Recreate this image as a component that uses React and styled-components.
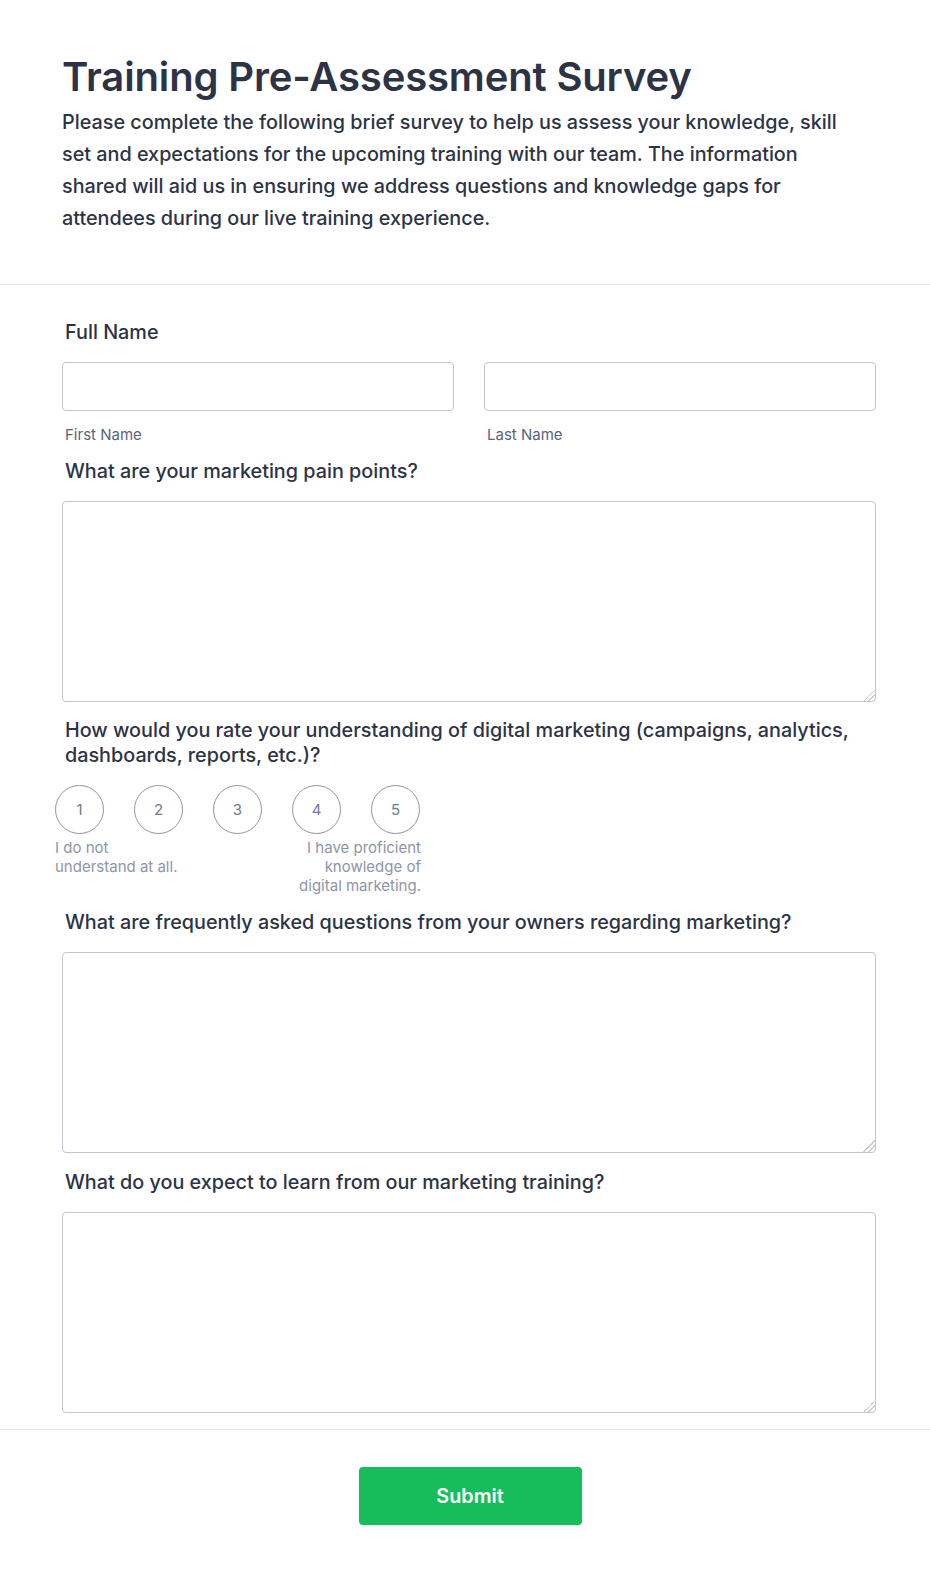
import React from 'react';
import styled, { createGlobalStyle } from 'styled-components';

const GlobalStyle = createGlobalStyle`
	html, body {
		margin: 0;
		padding: 0;
		background: #ffffff;
	}
	body {
		font-family: Inter, 'Noto Sans', 'Liberation Sans', sans-serif;
		color: #2c3345;
	}
	* {
		box-sizing: border-box;
	}
`;

const Page = styled.div`
	width: 100%;
	background: #fff;
`;

const Header = styled.header`
	padding: 53px 0 50px 62px;
	border-bottom: 1px solid #e3e5ec;
`;

const Inner = styled.div`
	width: 800px;
`;

const Title = styled.h1`
	margin: 0 0 5px;
	font-size: 40px;
	line-height: 48px;
	font-weight: 600;
	letter-spacing: -0.15px;
	color: #2c3345;
	white-space: nowrap;
`;

const Description = styled.p`
	margin: 0;
	font-size: 19.8px;
	line-height: 32px;
	font-weight: 500;
	color: #2c3345;
`;

const Form = styled.form`
	padding: 35px 0 16px 62px;
	display: flex;
	flex-direction: column;
	width: 876px;
`;

const Field = styled.div`
	display: flex;
	flex-direction: column;
	margin-bottom: ${({ $gap }) => $gap || 0}px;
`;

const Label = styled.label`
	padding-left: 3px;
	font-size: 19.8px;
	line-height: 25px;
	font-weight: 500;
	color: #2c3345;
	margin-bottom: ${({ $gap }) => $gap || 17}px;
`;

const NameRow = styled.div`
	display: grid;
	grid-template-columns: 1fr 1fr;
	column-gap: 30px;
`;

const NameCol = styled.div`
	display: flex;
	flex-direction: column;
`;

const Input = styled.input`
	height: 49px;
	width: 100%;
	border: 1px solid #c3c6d1;
	border-radius: 4px;
	background: #fff;
	font: inherit;
`;

const SubLabel = styled.span`
	padding-left: 3px;
	margin-top: 14px;
	font-size: 15px;
	line-height: 20px;
	color: #57647e;
`;

const TextArea = styled.textarea`
	display: block;
	width: 100%;
	height: 201px;
	border: 1px solid #c3c6d1;
	border-radius: 4px;
	background: #fff;
	resize: vertical;
	font: inherit;

	&::-webkit-resizer {
		background: linear-gradient(
			135deg,
			transparent 0 60%,
			#c8cbd5 60% 65%,
			transparent 65% 76%,
			#c8cbd5 76% 81%,
			transparent 81%
		);
	}
`;

const Scale = styled.div`
	display: flex;
	flex-direction: column;
	width: 366px;
	margin-left: -7px;
`;

const Circles = styled.div`
	display: flex;
	gap: 30px;
`;

const Circle = styled.div`
	width: 49px;
	height: 49px;
	border-radius: 50%;
	border: 1px solid #8d95a8;
	display: flex;
	align-items: center;
	justify-content: center;
	font-size: 15px;
	color: #6f7892;
`;

const Captions = styled.div`
	display: flex;
	justify-content: space-between;
	margin-top: 4px;
`;

const Caption = styled.span`
	font-size: 15px;
	line-height: 19px;
	color: #8d95a8;
	text-align: ${({ $align }) => $align || 'left'};
`;

const Footer = styled.div`
	border-top: 1px solid #e3e5ec;
	padding: 37px 0 50px 62px;
`;

const FooterInner = styled.div`
	width: 816px;
	display: flex;
	justify-content: center;
`;

const SubmitButton = styled.button`
	width: 223px;
	height: 58px;
	border: none;
	border-radius: 4px;
	background: #18bd5b;
	color: #fff;
	font-family: inherit;
	font-size: 19.8px;
	font-weight: 600;
	cursor: pointer;
`;

export default function App() {
	return (
		<Page>
			<GlobalStyle />
			<Header>
				<Inner>
					<Title>Training Pre-Assessment Survey</Title>
					<Description>
						Please complete the following brief survey to help us assess your knowledge, skill set and
						expectations for the upcoming training with our team. The information shared will aid us in
						ensuring we address questions and knowledge gaps for attendees during our live training
						experience.
					</Description>
				</Inner>
			</Header>

			<Form onSubmit={(e) => e.preventDefault()}>
				<Field $gap={14}>
					<Label>Full Name</Label>
					<NameRow>
						<NameCol>
							<Input />
							<SubLabel>First Name</SubLabel>
						</NameCol>
						<NameCol>
							<Input />
							<SubLabel>Last Name</SubLabel>
						</NameCol>
					</NameRow>
				</Field>

				<Field $gap={16}>
					<Label>What are your marketing pain points?</Label>
					<TextArea />
				</Field>

				<Field $gap={15}>
					<Label $gap={17}>
						How would you rate your understanding of digital marketing (campaigns, analytics,
						dashboards, reports, etc.)?
					</Label>
					<Scale>
						<Circles>
							{[1, 2, 3, 4, 5].map((n) => (
								<Circle key={n}>{n}</Circle>
							))}
						</Circles>
						<Captions>
							<Caption>
								I do not
								<br />
								understand at all.
							</Caption>
							<Caption $align="right">
								I have proficient
								<br />
								knowledge of
								<br />
								digital marketing.
							</Caption>
						</Captions>
					</Scale>
				</Field>

				<Field $gap={17}>
					<Label>What are frequently asked questions from your owners regarding marketing?</Label>
					<TextArea />
				</Field>

				<Field>
					<Label>What do you expect to learn from our marketing training?</Label>
					<TextArea />
				</Field>
			</Form>

			<Footer>
				<FooterInner>
					<SubmitButton type="submit">Submit</SubmitButton>
				</FooterInner>
			</Footer>
		</Page>
	);
}
